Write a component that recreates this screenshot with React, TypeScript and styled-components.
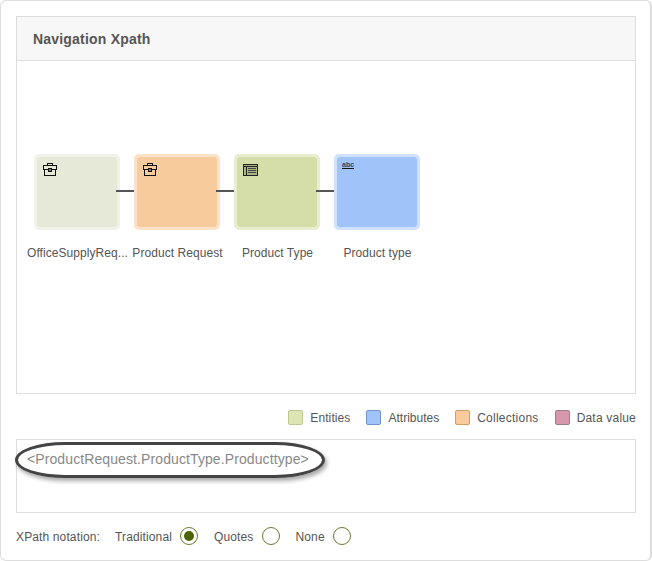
import React from "react";
import styled, { createGlobalStyle } from "styled-components";

const Global = createGlobalStyle`
  html, body { margin: 0; padding: 0; background: #fff; }
  body { font-family: "Liberation Sans", Arial, sans-serif; color: #555; }
`;

const Card = styled.div`
  position: relative;
  box-sizing: border-box;
  width: 652px;
  height: 561px;
  border: 1px solid #ddd;
  border-right-width: 2px;
  border-radius: 6px;
  padding: 15px 14px 0 15px;
`;

const Panel = styled.section`
  box-sizing: border-box;
  height: 378px;
  border: 1px solid #ddd;
  display: flex;
  flex-direction: column;
`;

const PanelHeader = styled.header`
  box-sizing: border-box;
  height: 44px;
  background: #f7f7f7;
  border-bottom: 1px solid #ddd;
  padding-left: 16px;
  display: flex;
  align-items: center;
  font-size: 14px;
  font-weight: 700;
  letter-spacing: 0.2px;
  color: #555;
`;

const Canvas = styled.div`
  display: flex;
  padding: 93px 0 0 10px;
`;

const Column = styled.div`
  position: relative;
  width: 100px;
  display: flex;
  flex-direction: column;
  align-items: center;
`;

const Node = styled.div<{ $bg: string; $edge: string }>`
  box-sizing: border-box;
  width: 86px;
  height: 76px;
  border: 3px solid ${(p) => p.$edge};
  border-radius: 5px;
  background: ${(p) => p.$bg};
  background-clip: padding-box;
  padding: 5px 0 0 6px;
`;

const Connector = styled.div`
  position: absolute;
  left: 89px;
  top: 36px;
  width: 22px;
  height: 2px;
  background: #555;
`;

const NodeLabel = styled.div`
  margin-top: 16px;
  padding-left: 1px;
  font-size: 12px;
  line-height: 14px;
  letter-spacing: 0.06px;
  color: #555;
  white-space: nowrap;
`;

const Abc = styled.span`
  display: block;
  width: 12px;
  font-size: 7px;
  font-weight: 700;
  line-height: 7px;
  color: #2c3f5c;
  border-bottom: 1px solid #111;
  margin-left: -1px;
  margin-top: -1px;
`;

const Legend = styled.div`
  display: flex;
  justify-content: flex-end;
  align-items: center;
  height: 15px;
  margin-top: 16px;
`;

const LegendItem = styled.div<{ $track: number }>`
  display: flex;
  align-items: center;
  margin-left: 16px;
  font-size: 12px;
  letter-spacing: ${(p) => p.$track}px;
  color: #555;
`;

const Swatch = styled.span<{ $bg: string; $edge: string }>`
  box-sizing: border-box;
  width: 15px;
  height: 15px;
  margin-right: 7px;
  border: 1px solid ${(p) => p.$edge};
  border-radius: 2px;
  background: ${(p) => p.$bg};
`;

const PathBox = styled.div`
  box-sizing: border-box;
  height: 74px;
  margin-top: 14px;
  border: 1px solid #ddd;
  padding: 11px 0 0 10px;
  font-size: 14px;
  line-height: 16px;
  letter-spacing: 0.1px;
  color: #888;
`;

const Callout = styled.div`
  position: absolute;
  left: 14px;
  top: 441px;
  box-sizing: border-box;
  width: 310px;
  height: 36px;
  border: 3px solid #444;
  border-radius: 50px / 18px;
  box-shadow: 2px 3px 4px rgba(0, 0, 0, 0.35);
`;

const Notation = styled.div`
  display: flex;
  align-items: center;
  height: 18px;
  margin-top: 14px;
  font-size: 12px;
  letter-spacing: 0.13px;
  color: #555;
`;

const NotationTitle = styled.span`
  width: 99px;
  padding-top: 2px;
`;

const RadioText = styled.span`
  margin-right: 8px;
  padding-top: 2px;
`;

const Radio = styled.span<{ $on?: boolean }>`
  box-sizing: border-box;
  width: 18px;
  height: 18px;
  margin-right: 16px;
  border-radius: 50%;
  border: 1px solid #6b7a2c;
  display: flex;
  align-items: center;
  justify-content: center;
  &::after {
    content: "";
    display: ${(p) => (p.$on ? "block" : "none")};
    width: 10px;
    height: 10px;
    border-radius: 50%;
    background: #4f6200;
  }
`;

const Briefcase = () => (
  <svg width="14" height="15" viewBox="0 0 14 15" fill="none" stroke="#111" strokeWidth="1" shapeRendering="crispEdges" style={{ display: "block" }}>
    <path d="M4.5 3.5V1.5H9.5V3.5" />
    <path d="M.5 3.5H13.5V7.5H.5Z" />
    <path d="M1.5 7.5V13.5H12.5V7.5" />
    <path d="M5.5 6.5H8.5V9.5H5.5Z" fill="#777" />
  </svg>
);

const TableIcon = () => (
  <svg width="15" height="12" viewBox="0 0 15 12" fill="none" shapeRendering="crispEdges" style={{ display: "block", marginTop: 2 }}>
    <rect x=".5" y=".5" width="14" height="11" fill="#a9b487" stroke="#222" />
    <path d="M.5 2.5H14.5M3.5 2.5V11.5" stroke="#222" />
    <path d="M5 4.5H13M5 6.5H13M5 8.5H13" stroke="#444" />
  </svg>
);

const nodes = [
  { label: "OfficeSupplyReq...", bg: "#e6e9d7", edge: "#f1f3e8", icon: <Briefcase /> },
  { label: "Product Request", bg: "#f7cb9c", edge: "#fbe2c9", icon: <Briefcase /> },
  { label: "Product Type", bg: "#d5dea9", edge: "#e8edcf", icon: <TableIcon /> },
  { label: "Product type", bg: "#a0c4fa", edge: "#cfe1fc", icon: <Abc>abc</Abc> },
];

const legend = [
  { label: "Entities", bg: "#dde5b5", edge: "#bcc88c", track: 0.1 },
  { label: "Attributes", bg: "#a0c4fa", edge: "#6f94cc", track: 0 },
  { label: "Collections", bg: "#f7cb9c", edge: "#d49a63", track: 0.25 },
  { label: "Data value", bg: "#d797ad", edge: "#9c8088", track: 0.2 },
];

export default function App() {
  return (
    <>
      <Global />
      <Card>
        <Panel>
          <PanelHeader>Navigation Xpath</PanelHeader>
          <Canvas>
            {nodes.map((n, i) => (
              <Column key={n.label}>
                <Node $bg={n.bg} $edge={n.edge}>{n.icon}</Node>
                {i < nodes.length - 1 && <Connector />}
                <NodeLabel>{n.label}</NodeLabel>
              </Column>
            ))}
          </Canvas>
        </Panel>
        <Legend>
          {legend.map((l) => (
            <LegendItem key={l.label} $track={l.track}>
              <Swatch $bg={l.bg} $edge={l.edge} />
              {l.label}
            </LegendItem>
          ))}
        </Legend>
        <PathBox>&lt;ProductRequest.ProductType.Producttype&gt;</PathBox>
        <Callout />
        <Notation>
          <NotationTitle>XPath notation:</NotationTitle>
          <RadioText>Traditional</RadioText>
          <Radio $on />
          <RadioText>Quotes</RadioText>
          <Radio />
          <RadioText>None</RadioText>
          <Radio />
        </Notation>
      </Card>
    </>
  );
}
